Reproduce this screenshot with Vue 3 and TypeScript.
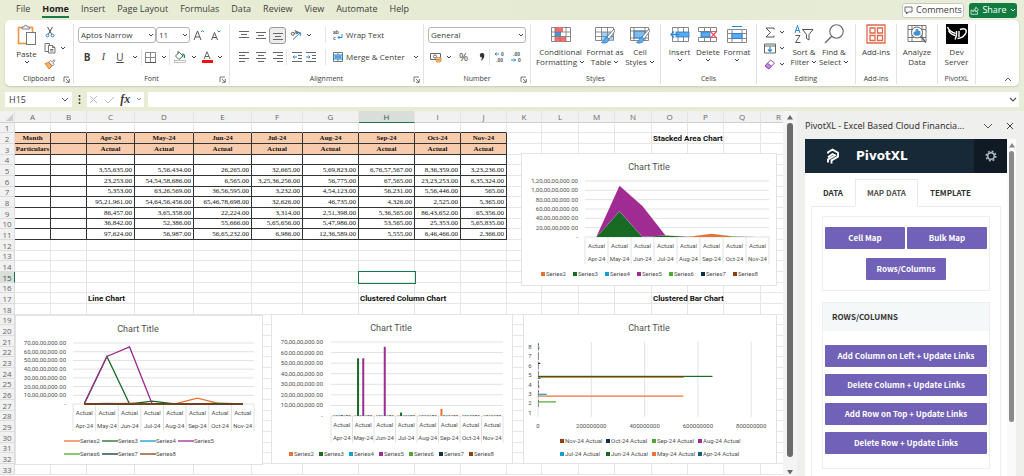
<script setup lang="ts">
interface Series {
  name: string
  color: string
  values: number[]
}

const menuTabs = ['File', 'Home', 'Insert', 'Page Layout', 'Formulas', 'Data', 'Review', 'View', 'Automate', 'Help']
const columns = 'ABCDEFGHIJKLMNOPQR'.split('')
const months = ['Apr-24', 'May-24', 'Jun-24', 'Jul-24', 'Aug-24', 'Sep-24', 'Oct-24', 'Nov-24']

const series: Series[] = [
  { name: 'Series2', color: '#e97132', values: [355635, 556434, 26265, 32665, 569823, 67657567, 836359, 323236] },
  { name: 'Series3', color: '#196b24', values: [23253, 545458686, 6565, 32536256, 56775, 67565, 2323253, 635324] },
  { name: 'Series4', color: '#0f9ed5', values: [5353, 6326569, 3656595, 3232, 454123, 56231, 556446, 565] },
  { name: 'Series5', color: '#a02b93', values: [9521961, 546456456, 654678698, 32626, 46735, 4326, 2525, 5365] },
  { name: 'Series6', color: '#4ea72e', values: [86457, 365358, 22224, 3314, 251398, 536565, 8643652, 65356] },
  { name: 'Series7', color: '#0b3048', values: [36842, 52386, 55666, 565656, 547986, 53565, 25353, 565835] },
  { name: 'Series8', color: '#8f3c12', values: [97624, 56987, 5665232, 6986, 1236589, 5555, 646466, 2366] },
]

const monthColors = ['#156082', '#e97132', '#196b24', '#0f9ed5', '#a02b93', '#4ea72e', '#0b3048', '#8f3c12']
const monthLegend = [7, 6, 5, 4, 3, 2, 1, 0]

const titles: Record<string, string> = {
  O2: 'Stacked Area Chart',
  C17: 'Line Chart',
  H17: 'Clustered Column Chart',
  O17: 'Clustered Bar Chart',
}

function money(n: number): string {
  return n.toLocaleString('en-IN', { minimumFractionDigits: 2 })
}

function cellText(col: number, row: number): string {
  const title = titles[columns[col] + row]
  if (title) return title
  if (row === 2 && col === 0) return 'Month'
  if (row === 3 && col === 0) return 'Particulars'
  if (col < 2 || col > 9) return ''
  if (row === 2) return months[col - 2]
  if (row === 3) return 'Actual'
  if (row >= 5 && row <= 11) return money(series[row - 5].values[col - 2])
  return ''
}

function cellClass(col: number, row: number) {
  const boxed = col < 10 && row >= 2 && row <= 11
  return {
    boxed,
    'above-box': col < 10 && row === 1,
    heading: boxed && row <= 3,
    amount: boxed && row >= 5,
    title: Boolean(titles[columns[col] + row]),
    selected: col === 7 && row === 15,
  }
}

function axis(max: number, step: number, top: number, bottom: number) {
  const ticks: { y: number; label: string }[] = []
  for (let v = max; v >= 0; v -= step) {
    ticks.push({ y: bottom - ((bottom - top) * v) / max, label: v ? money(v) : '-' })
  }
  return ticks
}

const area = { left: 63, right: 247, top: 27, bottom: 83, labelX: 56, max: 1.2e9, legendY: 122, legendX: 19, legendStep: 32 }
const line = { left: 57, right: 238, top: 27, bottom: 88, labelX: 50, max: 7e8 }
const column = { left: 59, right: 231, top: 27, bottom: 101, labelX: 51, max: 7e8, legendY: 141, legendX: 17, legendStep: 30 }
const bar = { left: 14, top: 27, band: 9.4, scale: 53.3 / 2e8 }

type Plot = { left: number; right: number; top: number; bottom: number; max: number }

function centre(p: Plot, i: number): number {
  return p.left + ((p.right - p.left) * (i + 0.5)) / 8
}
function height(p: Plot, v: number): number {
  return ((p.bottom - p.top) * v) / p.max
}
function linePoints(s: Series): string {
  return s.values.map((v, i) => `${centre(line, i)},${line.bottom - height(line, v)}`).join(' ')
}
function stackTotal(upTo: number, month: number): number {
  return series.slice(0, upTo).reduce((sum, s) => sum + s.values[month], 0)
}
function areaPoints(k: number): string {
  const upper = months.map((_, i) => `${centre(area, i)},${area.bottom - height(area, stackTotal(k + 1, i))}`)
  const lower = months.map((_, i) => `${centre(area, i)},${area.bottom - height(area, stackTotal(k, i))}`).reverse()
  return upper.concat(lower).join(' ')
}

const axisCharts = {
  area: { plot: area, ticks: axis(1.2e9, 2e8, area.top, area.bottom), size: '0 0 254 131', titleX: 127 },
  line: { plot: line, ticks: axis(7e8, 1e8, line.top, line.bottom), size: '0 0 246 148', titleX: 122 },
  column: { plot: column, ticks: axis(7e8, 1e8, column.top, column.bottom), size: '0 0 240 148', titleX: 119 },
}

const paneActions = [
  'Add Column on Left + Update Links',
  'Delete Column + Update Links',
  'Add Row on Top + Update Links',
  'Delete Row + Update Links',
]
</script>

<template>
  <div class="app">
    <svg class="defs" aria-hidden="true">
      <symbol id="chev" viewBox="0 0 6 6"><path d="M1 2l2 2 2-2" fill="none" stroke="#444" stroke-width="1" /></symbol>
      <symbol id="launch" viewBox="0 0 7 7"><path d="M1 6V1h5M3 3l3 3M6.300 3v3.300H3" fill="none" stroke="#555" stroke-width=".8" /></symbol>
    </svg>

    <header class="menu">
      <nav class="tabs">
        <button v-for="t in menuTabs" :key="t" :class="{ active: t === 'Home' }">{{ t }}</button>
      </nav>
      <button class="comments">
        <svg width="9" height="9" viewBox="0 0 9 9"><path d="M1 1h7v5H4L2.500 8V6H1z" fill="none" stroke="#444" stroke-width=".8" /></svg>
        Comments
      </button>
      <button class="share">
        <svg width="9" height="9" viewBox="0 0 9 9"><path d="M2.500 4H1v4.300h6.500V5.500M2.800 6c.2-2 1.300-3 3-3V1.200L8.400 3.700 5.800 6V4.400c-1.300 0-2.200.5-3 1.600z" fill="none" stroke="#fff" stroke-width=".7" /></svg>
        Share
        <svg width="6" height="6" viewBox="0 0 6 6"><path d="M1 2l2 2 2-2" fill="none" stroke="#fff" /></svg>
      </button>
    </header>

    <section class="ribbon" aria-label="Ribbon">
      <div class="group g-clipboard">
        <div class="body clip">
          <button class="big">
            <svg width="20" height="22" viewBox="0 0 20 22">
              <rect x="1.500" y="3.500" width="14" height="16" fill="#fff" stroke="#f0953f" stroke-width="1.600" />
              <path d="M5 5V3h2a1.700 1.700 0 0 1 3.400 0h2v2z" fill="#fff" stroke="#777" stroke-width=".9" />
              <rect x="9.500" y="8.500" width="9" height="12" fill="#fff" stroke="#777" />
            </svg>
            <span>Paste</span>
            <svg class="chev"><use href="#chev" /></svg>
          </button>
          <div class="stack">
            <button aria-label="Cut"><svg width="10" height="12" viewBox="0 0 10 12"><path d="M2.500 1l4.300 7.500M7.500 1L3.200 8.500" fill="none" stroke="#555" /><circle cx="2.500" cy="9.500" r="1.400" fill="none" stroke="#2b88d8" /><circle cx="7.500" cy="9.500" r="1.400" fill="none" stroke="#2b88d8" /></svg></button>
            <span></span>
            <button aria-label="Copy"><svg width="12" height="12" viewBox="0 0 12 12"><path d="M4 9.500H1v-8h4.500V3M4.500 3.500h4l2.500 2V11H4.500zM8.500 3.500v2H11M6 7.500h3.500M6 9h3.500" fill="none" stroke="#666" stroke-width=".9" /></svg></button>
            <button aria-label="Copy options"><svg class="chev"><use href="#chev" /></svg></button>
            <button aria-label="Format painter"><svg width="12" height="11" viewBox="0 0 12 11"><path d="M1 4.500l4 5.500 3-3-3.500-3.500z" fill="#f7b267" stroke="#e8842a" /><path d="M4.500 3l4 4L10 5.500 8.800 4 11 1.800 10 .8 7.800 2.800 6.500 1.500z" fill="#fff" stroke="#666" stroke-width=".8" /></svg></button>
            <span></span>
          </div>
        </div>
        <div class="caption">Clipboard<svg class="launch"><use href="#launch" /></svg></div>
      </div>

      <div class="group g-font">
        <div class="body rows">
          <div class="row font-top">
            <label class="pick"><select aria-label="Font"><option>Aptos Narrow</option></select><svg class="chev"><use href="#chev" /></svg></label>
            <label class="pick"><select aria-label="Font size"><option>11</option></select><svg class="chev"><use href="#chev" /></svg></label>
            <button aria-label="Increase font size"><svg width="12" height="12" viewBox="0 0 12 12"><path d="M1 11L4.500 2 8 11M2.200 8h4.600" fill="none" stroke="#555" /><path d="M8 3l1.500-1.500L11 3" fill="none" stroke="#2b88d8" /></svg></button>
            <button aria-label="Decrease font size"><svg width="12" height="12" viewBox="0 0 12 12"><path d="M1.500 11l3-7.500 3 7.500M2.600 8.500h3.800" fill="none" stroke="#555" /><path d="M7.500 1.500L9 3l1.500-1.500" fill="none" stroke="#2b88d8" /></svg></button>
          </div>
          <div class="row font-bottom">
            <button class="glyph bold">B</button>
            <button class="glyph italic">I</button>
            <button class="glyph under">U</button>
            <button aria-label="Underline options"><svg class="chev"><use href="#chev" /></svg></button>
            <button class="split" aria-label="Borders"><svg width="11" height="11" viewBox="0 0 11 11"><path d="M.5.5h10v10H.5zM5.500.5v10M.5 5.500h10" fill="none" stroke="#888" /><path d="M0 10.500h11" stroke="#555" /></svg></button>
            <button aria-label="Border options"><svg class="chev"><use href="#chev" /></svg></button>
            <button class="split" aria-label="Fill color"><svg width="12" height="12" viewBox="0 0 12 12"><path d="M1.500 5l3.700-3.800L9 5 5 8.500zM4 0v3" fill="#fff" stroke="#4a6b50" /><path d="M8.500 3c2 .5 2.500 2 1.700 4" fill="none" stroke="#1f8a5b" stroke-width="1.300" /><rect x=".5" y="9.500" width="11" height="2" fill="#fff" stroke="#aaa" stroke-width=".7" /></svg></button>
            <button aria-label="Fill options"><svg class="chev"><use href="#chev" /></svg></button>
            <button aria-label="Font color"><svg width="12" height="12" viewBox="0 0 12 12"><path d="M3 8l3-7.300L9 8M4 5.500h4" fill="none" stroke="#666" /><rect x="1" y="9" width="11" height="3" fill="#f01414" /></svg></button>
            <button aria-label="Font color options"><svg class="chev"><use href="#chev" /></svg></button>
          </div>
        </div>
        <div class="caption">Font<svg class="launch"><use href="#launch" /></svg></div>
      </div>

      <div class="group g-align">
        <div class="body rows">
          <div class="row align-row">
            <button aria-label="Top align"><svg width="10" height="10" viewBox="0 0 10 10"><path d="M0 1.500h10M2 4.500h6M0 7.500h10" stroke="#666" /></svg></button>
            <button aria-label="Middle align"><svg width="10" height="10" viewBox="0 0 10 10"><path d="M0 2.500h10M2 5.500h6M0 8.500h10" stroke="#666" /></svg></button>
            <button class="on" aria-label="Bottom align"><svg width="10" height="10" viewBox="0 0 10 10"><path d="M0 3.500h10M2 6.500h6M0 9.500h10" stroke="#666" /></svg></button>
            <button aria-label="Orientation"><svg width="12" height="12" viewBox="0 0 12 12"><path d="M3 10.500L10 4M7 3.500l3.500.2L10.300 7" fill="none" stroke="#2b88d8" /><circle cx="2.800" cy="4.800" r="1.500" fill="none" stroke="#555" stroke-width=".9" /><path d="M3.500 3.200l1.500 2M5 1l2.300 3.500" stroke="#555" stroke-width=".9" /><circle cx="6.800" cy="3.500" r="1.200" fill="none" stroke="#555" stroke-width=".9" /></svg></button>
            <button aria-label="Orientation options"><svg class="chev"><use href="#chev" /></svg></button>
            <button class="split wide"><svg width="10" height="12" viewBox="0 0 10 12"><text x="0" y="5" class="tiny">ab</text><text x="0" y="11" class="tiny">c</text><path d="M9 5v3.500H5M6.500 7L5 8.500 6.500 10" fill="none" stroke="#2b88d8" /></svg>Wrap Text</button>
          </div>
          <div class="row align-row">
            <button aria-label="Align left"><svg width="10" height="10" viewBox="0 0 10 10"><path d="M0 .5h10M0 3.500h6M0 6.500h10M0 9.500h6" stroke="#666" /></svg></button>
            <button aria-label="Center"><svg width="10" height="10" viewBox="0 0 10 10"><path d="M0 .5h10M2 3.500h6M0 6.500h10M2 9.500h6" stroke="#666" /></svg></button>
            <button aria-label="Align right"><svg width="10" height="10" viewBox="0 0 10 10"><path d="M0 .5h10M4 3.500h6M0 6.500h10M4 9.500h6" stroke="#666" /></svg></button>
            <button class="split" aria-label="Decrease indent"><svg width="10" height="10" viewBox="0 0 10 10"><path d="M0 .5h10M6 3.500h4M6 6.500h4M0 9.500h10" stroke="#666" /><path d="M5 5H1M2.500 3.500L1 5l1.500 1.500" fill="none" stroke="#2b88d8" /></svg></button>
            <button class="indent" aria-label="Increase indent"><svg width="10" height="10" viewBox="0 0 10 10"><path d="M0 .5h10M6 3.500h4M6 6.500h4M0 9.500h10" stroke="#666" /><path d="M0 5h4M2.500 3.500L4 5 2.500 6.500" fill="none" stroke="#2b88d8" /></svg></button>
            <button class="split wide"><svg width="10" height="12" viewBox="0 0 10 12"><path d="M.5 1.500h9v9h-9zM5 1.500v9" fill="#fff" stroke="#777" /><rect x=".5" y="4" width="9" height="4" fill="#9fd0f5" stroke="#2b88d8" /><path d="M2 6h6" stroke="#1767ad" /></svg>Merge &amp; Center<svg class="chev"><use href="#chev" /></svg></button>
          </div>
        </div>
        <div class="caption">Alignment<svg class="launch"><use href="#launch" /></svg></div>
      </div>

      <div class="group g-number">
        <div class="body rows">
          <div class="row">
            <label class="pick"><select aria-label="Number format"><option>General</option></select><svg class="chev"><use href="#chev" /></svg></label>
          </div>
          <div class="row number-row">
            <button aria-label="Accounting format"><svg width="12" height="11" viewBox="0 0 12 11"><path d="M.5 1.500h10v6H.5z" fill="#fff" stroke="#666" /><circle cx="5" cy="4.500" r="1.500" fill="none" stroke="#666" /><path d="M6 6.500c0-1.500 5-1.500 5 0V9c0 1.500-5 1.500-5 0zM6 7.500c1 1 4 1 5 0" fill="#fbd09c" stroke="#e8842a" stroke-width=".9" /></svg></button>
            <button aria-label="Accounting options"><svg class="chev"><use href="#chev" /></svg></button>
            <button class="glyph percent">%</button>
            <button aria-label="Comma style"><svg width="6" height="10" viewBox="0 0 6 10"><path d="M3 1a2 2 0 0 1 2.300 2.200C5.300 6 4 8 1.500 9c1-1.300 1.500-2.500 1.500-3.600A2.200 2.200 0 0 1 3 1z" fill="#333" /></svg></button>
            <button class="split" aria-label="Increase decimal"><svg width="11" height="12" viewBox="0 0 11 12"><path d="M5 3H1M2.500 1.500L1 3l1.500 1.500" fill="none" stroke="#2b88d8" /><text x="7" y="5" class="tiny">0</text><text x="2" y="11" class="tiny">.00</text></svg></button>
            <button aria-label="Decrease decimal"><svg width="11" height="12" viewBox="0 0 11 12"><path d="M0 9h4.500M3 7.500L4.500 9 3 10.500" fill="none" stroke="#2b88d8" /><text x="2" y="5" class="tiny">.00</text><text x="7" y="11" class="tiny">0</text></svg></button>
          </div>
        </div>
        <div class="caption">Number<svg class="launch"><use href="#launch" /></svg></div>
      </div>

      <div class="group g-styles">
        <div class="body styles">
          <button class="big">
            <svg width="20" height="18" viewBox="0 0 20 18"><path d="M.5 1.500h19v14H.5z" fill="#fff" stroke="#888" /><rect x="4" y="1.500" width="8" height="4.500" fill="#ff6b6b" /><rect x="4" y="6" width="6" height="4.500" fill="#4a90d9" /><rect x="4" y="10.500" width="11" height="5" fill="#ff6b6b" /><path d="M4 1v15M9 10v6M15 1v15M0 6h20M0 10.500h20" stroke="#777" stroke-width=".8" /></svg>
            <span>Conditional</span><span>Formatting <svg class="chev"><use href="#chev" /></svg></span>
          </button>
          <button class="big">
            <svg width="20" height="18" viewBox="0 0 20 18"><path d="M.5 1.500h18v13H.5z" fill="#fff" stroke="#888" /><rect x="6" y="6" width="12" height="8.500" fill="#9fd0f5" /><path d="M6.500 1v14M12.500 1v14M0 6h19M0 10.500h19" stroke="#777" stroke-width=".8" /><path d="M19 3l-7 8 2 2 6-8z" fill="#fff" stroke="#666" stroke-width=".8" /><path d="M12 11c-3 0-2 4-5.500 5.500 3 1.500 7.500 0 7.500-3.500z" fill="#5aaaf0" stroke="#2b78c8" stroke-width=".8" /></svg>
            <span>Format as</span><span>Table <svg class="chev"><use href="#chev" /></svg></span>
          </button>
          <button class="big">
            <svg width="20" height="18" viewBox="0 0 20 18"><path d="M.5 1.500h18v13H.5z" fill="#fff" stroke="#888" /><rect x="4" y="5" width="11" height="7" fill="#7cbcf2" stroke="#2b88d8" /><path d="M4 1v14M15 1v14M0 5h19M0 12h19" stroke="#777" stroke-width=".8" /><path d="M19 3l-7 8 2 2 6-8z" fill="#fff" stroke="#666" stroke-width=".8" /><path d="M12 11c-3 0-2 4-5.500 5.500 3 1.500 7.500 0 7.500-3.500z" fill="#5aaaf0" stroke="#2b78c8" stroke-width=".8" /></svg>
            <span>Cell</span><span>Styles <svg class="chev"><use href="#chev" /></svg></span>
          </button>
        </div>
        <div class="caption">Styles</div>
      </div>

      <div class="group g-cells">
        <div class="body cells">
          <button class="big">
            <svg width="20" height="18" viewBox="0 0 20 18"><path d="M2.500 1.500h16v14h-16zM8 1.500v14M13.500 1.500v14" fill="#fff" stroke="#888" /><rect x="6" y="6" width="13" height="5" fill="#5aaaf0" stroke="#2b78c8" stroke-width=".8" /><path d="M9 8.500H1M4 5.500l-3 3 3 3" fill="none" stroke="#2b88d8" stroke-width="1.300" /></svg>
            <span>Insert</span><svg class="chev"><use href="#chev" /></svg>
          </button>
          <button class="big">
            <svg width="20" height="18" viewBox="0 0 20 18"><path d="M.5 1.500h18v4H.5zM.5 11.500h18v4H.5zM6.500 1.500v4M12.500 1.500v4M6.500 11.500v4M12.500 11.500v4" fill="#fff" stroke="#888" /><rect x="3" y="6" width="9" height="5" fill="#5aaaf0" stroke="#2b78c8" stroke-width=".8" /><path d="M12 5l7 7.500M19 5l-7 7.500" stroke="#e8505b" stroke-width="1.200" /></svg>
            <span>Delete</span><svg class="chev"><use href="#chev" /></svg>
          </button>
          <button class="big">
            <svg width="20" height="18" viewBox="0 0 20 18"><path d="M5 .5h10" stroke="#2b88d8" /><path d="M.5 3.500h19v13H.5zM5 3.500v13M15 3.500v13M0 7.500h20M0 12.500h20" fill="#fff" stroke="#888" /><rect x="5" y="7.500" width="10" height="5" fill="#5aaaf0" stroke="#2b78c8" stroke-width=".8" /></svg>
            <span>Format</span><svg class="chev"><use href="#chev" /></svg>
          </button>
        </div>
        <div class="caption">Cells</div>
      </div>

      <div class="group g-editing">
        <div class="body editing">
          <div class="stack">
            <button aria-label="Sum"><svg width="10" height="11" viewBox="0 0 10 11"><path d="M9 2.500V1H1l4.500 4.500L1 10h8V8.500" fill="none" stroke="#555" /></svg></button>
            <button aria-label="Sum options"><svg class="chev"><use href="#chev" /></svg></button>
            <button aria-label="Fill"><svg width="12" height="11" viewBox="0 0 12 11"><path d="M.5 1h11v9H.5zM.5 3h11" fill="#fff" stroke="#666" /><path d="M6 3.500v5M4 6.500l2 2 2-2" fill="none" stroke="#2b88d8" stroke-width="1.200" /></svg></button>
            <button aria-label="Fill options"><svg class="chev"><use href="#chev" /></svg></button>
            <button aria-label="Clear"><svg width="12" height="11" viewBox="0 0 12 11"><path d="M1 7l5.500-6L10.500 4 5 10z" fill="#fff" stroke="#9b4fb5" /><path d="M1 7l2.500-2.800L7.500 7.300 5 10z" fill="#c886dc" stroke="#9b4fb5" /></svg></button>
            <button aria-label="Clear options"><svg class="chev"><use href="#chev" /></svg></button>
          </div>
          <button class="big">
            <svg width="20" height="20" viewBox="0 0 20 20"><path d="M1 9l2.500-7.500L6 9M2 6.500h3" fill="none" stroke="#2b88d8" /><path d="M1.500 11.500h4.500l-4.500 7H6.500" fill="none" stroke="#555" /><path d="M8.500 5.500h10.500l-4 5v5.500l-2.500-1.500v-4z" fill="none" stroke="#555" /></svg>
            <span>Sort &amp;</span><span>Filter <svg class="chev"><use href="#chev" /></svg></span>
          </button>
          <button class="big">
            <svg width="20" height="20" viewBox="0 0 20 20"><circle cx="12.500" cy="7.500" r="6.700" fill="none" stroke="#666" stroke-width="1.100" /><path d="M7.700 12.300L1 19" stroke="#666" stroke-width="1.300" /></svg>
            <span>Find &amp;</span><span>Select <svg class="chev"><use href="#chev" /></svg></span>
          </button>
        </div>
        <div class="caption">Editing</div>
      </div>

      <div class="group g-one">
        <div class="body single">
          <button class="big">
            <svg width="20" height="20" viewBox="0 0 20 20"><path d="M1 1h18v18H1zM4 4h5v5H4zM11.500 4h5v5h-5zM4 11.500h5v5H4zM11.500 11.500h5v5h-5z" fill="#fff" stroke="#e2694a" stroke-width="1.300" /></svg>
            <span>Add-ins</span>
          </button>
        </div>
        <div class="caption">Add-ins</div>
      </div>

      <div class="group g-one">
        <div class="body single">
          <button class="big">
            <svg width="20" height="20" viewBox="0 0 20 20"><path d="M1 1.500h18v16H1zM1 5.500h18M1 13.500h18M5 1.500v16M15 1.500v16" fill="#fff" stroke="#777" /><circle cx="10" cy="8.500" r="5.500" fill="#fff" stroke="#666" /><path d="M7 11V8h2v3.500M9 11.500V5.500h2v6M11 11.500V7.500h2v3.500" fill="#5aaaf0" stroke="#2b78c8" stroke-width=".7" /><path d="M14 12.500l5 6" stroke="#666" stroke-width="1.400" /></svg>
            <span>Analyze</span><span>Data</span>
          </button>
        </div>
      </div>

      <div class="group g-pivot">
        <div class="body single">
          <button class="big">
            <svg width="22" height="20" viewBox="0 0 22 20"><rect width="22" height="20" fill="#000" /><path d="M1.500 3c1.500 3.500 4.500 5.500 8 6.500M2.500 6.500c1.500 3 4 4.500 7 5" fill="none" stroke="#fff" stroke-width="1.500" /><path d="M9 15.500c1.500-2.500 2-5.500 1.500-8.500M13 13V7M14 5.500c4.500-1.500 7-.5 6 3-1 3-3.500 5.500-8.500 6" fill="none" stroke="#fff" stroke-width="1.400" /></svg>
            <span>Dev</span><span>Server</span>
          </button>
        </div>
        <div class="caption">PivotXL</div>
      </div>

      <button class="collapse" aria-label="Collapse ribbon"><svg width="8" height="6" viewBox="0 0 8 6"><path d="M1 5l3-3 3 3" fill="none" stroke="#555" /></svg></button>
    </section>

    <section class="formula" aria-label="Formula bar">
      <label class="name-box"><input value="H15" aria-label="Name box" /><svg width="8" height="6" viewBox="0 0 8 6"><path d="M1 1l3 3 3-3" fill="none" stroke="#555" /></svg></label>
      <svg width="3" height="9" viewBox="0 0 3 9"><path d="M1.500 0v2M1.500 3.500v2M1.500 7v2" stroke="#444" stroke-width="1.600" /></svg>
      <div class="fx">
        <button aria-label="Cancel"><svg width="9" height="9" viewBox="0 0 9 9"><path d="M1 1l7 7M8 1L1 8" stroke="#bbb" /></svg></button>
        <button aria-label="Enter"><svg width="11" height="8" viewBox="0 0 11 8"><path d="M1 4l3 3 6-6" fill="none" stroke="#bbb" /></svg></button>
        <button class="fx-label">fx</button>
        <svg width="6" height="5" viewBox="0 0 6 5"><path d="M1 1l2 2 2-2" fill="none" stroke="#888" /></svg>
      </div>
      <label class="entry"><input value="" aria-label="Formula" /><svg width="8" height="6" viewBox="0 0 8 6"><path d="M1 1l3 3 3-3" fill="none" stroke="#555" stroke-width="1.200" /></svg></label>
    </section>

    <main class="work">
      <div class="sheet">
        <table>
          <colgroup>
            <col class="c-head" />
            <col v-for="c in columns" :key="c" :class="'c-' + c" />
          </colgroup>
          <thead>
            <tr>
              <th class="corner"><svg width="7" height="7" viewBox="0 0 7 7"><path d="M7 0v7H0z" fill="#ccc" /></svg></th>
              <th v-for="c in columns" :key="c" :class="{ current: c === 'H' }">{{ c }}</th>
            </tr>
          </thead>
          <tbody>
            <tr v-for="r in 33" :key="r">
              <th :class="{ current: r === 15 }">{{ r }}</th>
              <td v-for="(c, i) in columns" :key="c" :class="cellClass(i, r)">{{ cellText(i, r) }}</td>
            </tr>
          </tbody>
        </table>

        <figure v-for="(chart, kind) in axisCharts" :key="kind" :class="['chart', 'chart-' + kind]">
          <svg :viewBox="chart.size">
            <text :x="chart.titleX" y="16" class="chart-title">Chart Title</text>
            <g v-for="t in chart.ticks" :key="t.y">
              <line :x1="chart.plot.left" :x2="chart.plot.right" :y1="t.y" :y2="t.y" class="grid-line" />
              <text :x="chart.plot.labelX" :y="t.y + 2" class="end">{{ t.label }}</text>
            </g>
            <line
              v-for="n in 9" :key="'s' + n" class="grid-line"
              :x1="chart.plot.left + ((chart.plot.right - chart.plot.left) * (n - 1)) / 8"
              :x2="chart.plot.left + ((chart.plot.right - chart.plot.left) * (n - 1)) / 8"
              :y1="chart.plot.bottom" :y2="chart.plot.bottom + 27"
            />
            <g v-for="(m, i) in months" :key="m">
              <text :x="centre(chart.plot, i)" :y="chart.plot.bottom + 11" class="mid">Actual</text>
              <text :x="centre(chart.plot, i)" :y="chart.plot.bottom + 24" class="mid">{{ m }}</text>
            </g>

            <template v-if="kind === 'area'">
              <polygon v-for="(s, k) in series" :key="s.name" :points="areaPoints(k)" :fill="s.color" />
            </template>
            <template v-else-if="kind === 'line'">
              <polyline v-for="s in series" :key="s.name" :points="linePoints(s)" :stroke="s.color" class="trace" />
              <g v-for="(s, k) in series" :key="'l' + s.name">
                <line :x1="48 + (k % 4) * 38" :x2="64 + (k % 4) * 38" :y1="k < 4 ? 125 : 138" :y2="k < 4 ? 125 : 138" :stroke="s.color" class="trace" />
                <text :x="64 + (k % 4) * 38" :y="k < 4 ? 127 : 140">{{ s.name }}</text>
              </g>
            </template>
            <template v-else>
              <g v-for="(s, k) in series" :key="s.name">
                <rect
                  v-for="(v, i) in s.values" :key="i"
                  :x="centre(column, i) + (k - 3) * 2.6 - 1" width="2"
                  :y="column.bottom - Math.max(height(column, v), 0.6)" :height="Math.max(height(column, v), 0.6)"
                  :fill="s.color"
                />
              </g>
            </template>
            <template v-if="kind !== 'line'">
              <g v-for="(s, k) in series" :key="'g' + s.name">
                <rect :x="(kind === 'area' ? area : column).legendX + k * (kind === 'area' ? area : column).legendStep" :y="(kind === 'area' ? area : column).legendY - 4" width="4" height="4" :fill="s.color" />
                <text :x="(kind === 'area' ? area : column).legendX + 5 + k * (kind === 'area' ? area : column).legendStep" :y="(kind === 'area' ? area : column).legendY">{{ s.name }}</text>
              </g>
            </template>
          </svg>
        </figure>

        <figure class="chart chart-bar">
          <svg viewBox="0 0 252 148">
            <text x="125" y="16" class="chart-title">Chart Title</text>
            <g v-for="n in 5" :key="n">
              <line :x1="bar.left + (n - 1) * 53.3" :x2="bar.left + (n - 1) * 53.3" y1="27" y2="102" class="grid-line" />
              <text :x="bar.left + (n - 1) * 53.3" y="113" class="mid">{{ (n - 1) * 200000000 }}</text>
            </g>
            <text v-for="n in 8" :key="'c' + n" x="6" :y="bar.top + (8 - n) * bar.band + 7" class="mid">{{ n }}</text>
            <g v-for="(s, k) in series" :key="s.name">
              <rect
                v-for="(v, i) in s.values" :key="i"
                :x="bar.left" :width="Math.max(v * bar.scale, 0.6)"
                :y="bar.top + (6 - k) * bar.band + 7.400 - i * 0.9" height="1.200"
                :fill="monthColors[i]"
              />
            </g>
            <g v-for="(m, i) in monthLegend" :key="'m' + m">
              <rect :x="36 + (i % 4) * 46" :y="i < 4 ? 124 : 137" width="4" height="4" :fill="monthColors[m]" />
              <text :x="41 + (i % 4) * 46" :y="i < 4 ? 128 : 141">{{ months[m] }} Actual</text>
            </g>
          </svg>
        </figure>
      </div>

      <div class="scroll sheet-scroll">
        <svg width="8" height="6" viewBox="0 0 8 6"><path d="M4 1l3 4.500H1z" fill="#666" /></svg>
        <i></i>
        <svg width="8" height="6" viewBox="0 0 8 6"><path d="M4 5.500L1 1h6z" fill="#666" /></svg>
      </div>

      <aside class="pane">
        <div class="pane-head">
          <h2>PivotXL - Excel Based Cloud Financia...</h2>
          <button aria-label="Pane options"><svg width="10" height="6" viewBox="0 0 10 6"><path d="M1 1l4 4 4-4" fill="none" stroke="#555" /></svg></button>
          <button aria-label="Close pane"><svg width="8" height="8" viewBox="0 0 8 8"><path d="M1 1l6 6M7 1L1 7" stroke="#444" /></svg></button>
        </div>
        <div class="pane-body">
          <div class="pane-page">
            <div class="brand">
              <svg width="14" height="17" viewBox="0 0 14 17"><path d="M2 5.500V4.200L6.500 1.700l5.500 3v4L5.500 12.300v3.200M2 9.200L6.500 6l2.500 1.300-7 4.200v3" fill="none" stroke="#fff" stroke-width="1.900" /></svg>
              <strong>PivotXL</strong>
              <button aria-label="Settings"><svg width="12" height="12" viewBox="0 0 12 12"><circle cx="6" cy="6" r="3.300" fill="none" stroke="#b4bbc4" stroke-width="1.500" /><circle cx="6" cy="6" r="4.800" fill="none" stroke="#b4bbc4" stroke-width="1.500" stroke-dasharray="1.900 1.870" /></svg></button>
            </div>
            <nav class="pane-tabs">
              <button>DATA</button>
              <button class="active">MAP DATA</button>
              <button>TEMPLATE</button>
            </nav>
            <div class="panel">
              <div class="card maps">
                <button class="action">Cell Map</button>
                <button class="action">Bulk Map</button>
                <button class="action">Rows/Columns</button>
              </div>
              <div class="card">
                <h3>ROWS/COLUMNS</h3>
                <div class="list">
                  <button v-for="a in paneActions" :key="a" class="action">{{ a }}</button>
                </div>
              </div>
            </div>
          </div>
          <div class="scroll pane-scroll">
            <svg width="8" height="6" viewBox="0 0 8 6"><path d="M4 1l3 4.500H1z" fill="#888" /></svg>
            <i></i>
          </div>
        </div>
      </aside>
    </main>
  </div>
</template>

<style>
body {
  margin: 0;
  overflow: hidden;
}
</style>

<style scoped>
.app {
  display: flex;
  flex-direction: column;
  height: 100vh;
  overflow: hidden;
  background: linear-gradient(90deg, #e9edd6, #e5ead2 60%, #e8edda);
  color: #3d3d3d;
  font: 8px/10px "Open Sans", "Noto Sans", sans-serif;
}
.defs { position: absolute; width: 0; height: 0; }
button {
  display: flex;
  align-items: center;
  justify-content: center;
  margin: 0;
  padding: 0;
  border: 0;
  background: none;
  color: inherit;
  font: inherit;
  white-space: nowrap;
}
svg { flex: none; display: block; }
.chev { width: 6px; height: 6px; }
.tiny { font: bold 5px "Liberation Sans", sans-serif; fill: #555; }

/* menu */
.menu { display: flex; align-items: center; height: 20px; padding: 0 7px 0 16px; gap: 5px; }
.tabs { display: flex; flex: 1; gap: 12px; font-size: 9px; line-height: 14px; }
.tabs button { height: 16px; border-bottom: 2px solid transparent; }
.tabs .active { font-weight: bold; color: #222; border-color: #1a7a48; }
.comments, .share { gap: 3px; height: 15px; border-radius: 3px; font-size: 9px; }
.comments { width: 62px; background: #fff; border: 1px solid #c9ccba; box-sizing: border-box; }
.share { width: 48px; background: #107c41; color: #fff; }

/* ribbon */
.ribbon {
  display: flex;
  height: 66px;
  margin: 0 5px;
  background: #fff;
  border-radius: 5px;
  box-shadow: 0 1px 2px #c8ccb6;
}
.group {
  display: flex;
  flex-direction: column;
  flex: none;
  box-sizing: border-box;
  margin: 4px 0 2px;
  border-right: 1px solid #e2e2e2;
}
.g-clipboard { width: 69px; }
.g-font { width: 156px; }
.g-align { width: 194px; }
.g-number { width: 107px; }
.g-styles { width: 130px; }
.g-cells { width: 96px; }
.g-editing { width: 99px; }
.g-one { width: 41px; }
.g-pivot { width: 38px; }
.body { flex: 1; }
.caption {
  position: relative;
  height: 10px;
  font-size: 7px;
  text-align: center;
}
.launch { position: absolute; right: 3px; top: 2px; width: 7px; height: 7px; }
.big { flex-direction: column; justify-content: flex-start; }
.big > svg:first-child { margin-bottom: 3px; }
.big span { display: flex; align-items: center; gap: 2px; }
.clip { display: grid; grid-template-columns: 43px 1fr; }
.clip .stack { grid-template-columns: 16px 9px; margin-left: -6px; }
.stack { display: grid; grid-template-rows: repeat(3, 16px); grid-template-columns: 14px 10px; align-content: start; justify-items: center; }
.rows { display: flex; flex-direction: column; gap: 4px; padding: 2px 4px 0; }
.row { display: flex; height: 18px; align-items: center; }
.pick { position: relative; display: flex; flex: 1; }
.pick select {
  appearance: none;
  width: 100%;
  height: 16px;
  padding: 0 2px;
  border: 1px solid #b5b5b5;
  border-radius: 3px;
  background: #fff;
  color: inherit;
  font: 8px/12px "Open Sans", "Noto Sans", sans-serif;
}
.pick .chev { position: absolute; right: 2px; top: 5px; }
.font-top { display: grid; grid-template-columns: 78px 34px 17px 17px; }
.font-bottom { display: grid; grid-template-columns: 18px 15px 18px 12px 18px 10px 20px 9px 17px 9px; }
.glyph { font-size: 10px; }
.bold { font-weight: bold; }
.italic { font-family: "Liberation Serif", serif; font-style: italic; }
.under { text-decoration: underline; }
.percent { font-size: 11px; }
.split { border-left: 1px solid #e4e4e4; height: 16px; }
.align-row { display: grid; grid-template-columns: 19px 16px 17px 20px 6px 1fr; }
.align-row .on { box-sizing: border-box; height: 17px; border: 1px solid #999; border-radius: 3px; background: #ececec; }
.align-row .wide { justify-content: flex-start; gap: 3px; margin-left: 13px; padding-left: 7px; }
.align-row .wide .chev { margin-left: 5px; }
.indent { margin-left: 4px; }
.number-row { display: grid; grid-template-columns: 16px 9px 21px 15px 20px 14px; }
.styles { display: grid; grid-template-columns: 49px 40px 30px; padding: 2px 0 0 5px; }
.cells { display: grid; grid-template-columns: 27px 30px 28px; padding: 2px 0 0 5px; }
.editing { display: grid; grid-template-columns: 26px 30px 30px; padding-left: 6px; }
.single { display: grid; }
.collapse { flex: 1; align-self: flex-end; justify-content: flex-end; height: 14px; padding-right: 7px; }

/* formula bar */
.formula { display: flex; align-items: center; gap: 4px; margin: 6px 5px 4px; height: 15px; }
.formula input {
  flex: 1;
  min-width: 0;
  padding: 0 4px;
  border: 0;
  background: none;
  color: inherit;
  font: 9px/13px "Open Sans", "Noto Sans", sans-serif;
}
.name-box, .entry, .fx { display: flex; align-items: center; height: 100%; background: #fff; }
.name-box { width: 67px; padding-right: 3px; box-sizing: border-box; margin-right: 2px; }
.entry { flex: 1; padding-right: 2px; }
.fx { width: 57px; box-sizing: border-box; padding: 0 2px; justify-content: space-between; margin-left: 2px; }
.fx-label { font: italic bold 12px/13px "Liberation Serif", serif; }

/* sheet */
.work { display: flex; flex: 1; min-height: 0; }
.sheet { position: relative; flex: 1; min-width: 0; overflow: hidden; background: #fff; }
table { table-layout: fixed; width: calc(100% + 14px); border-collapse: separate; border-spacing: 0; }
.c-head { width: 15px; }
.c-A, .c-B, .c-M, .c-O, .c-P { width: 36px; }
.c-C { width: 48px; }
.c-D { width: 59px; }
.c-E { width: 58px; }
.c-F { width: 51px; }
.c-G, .c-H { width: 56px; }
.c-I, .c-J { width: 46px; }
.c-K { width: 35px; }
.c-L, .c-N, .c-Q { width: 37px; }
th, td {
  box-sizing: border-box;
  height: 11px;
  padding: 0;
  border: solid #e6e6e6;
  border-width: 0 1px 1px 0;
  line-height: 9px;
  white-space: nowrap;
}
tbody tr:nth-child(3n + 1) > * { height: 10px; }
th { background: #f1f1f1; color: #666; font-weight: normal; font-size: 8px; border-color: #dcdcdc; }
thead th { height: 12px; border-right-color: #e4e4e4; border-bottom-color: #cfcfcf; }
.corner svg { margin: 2px 1px 0 auto; }
thead .current { background: #d9dedb; border-bottom-color: #1a7a48; color: #2d5a43; }
tbody .current { background: #d9dedb; border-right-color: #1a7a48; color: #2d5a43; }
td.above-box { border-bottom-color: #333; }
td.boxed {
  border-color: #333;
  color: #111;
  font-family: "Liberation Serif", serif;
  font-size: 7px;
  text-align: center;
}
td.amount { padding-right: 2px; text-align: right; }
td.heading { background: #f8cbad; font-weight: bold; }
td.title { font: bold 8px/9px Roboto, "Liberation Sans", sans-serif; color: #111; padding-left: 1px; }
td.selected { outline: 1px solid #1a7a48; outline-offset: 0; }

/* charts */
.chart { position: absolute; margin: 0; background: #fff; outline: 1px solid #e3e3e3; }
.chart svg { width: 100%; height: 100%; }
.chart text { font: 6px Roboto, "Liberation Sans", sans-serif; fill: #505050; }
.chart .chart-title { font-size: 9px; text-anchor: middle; }
.chart .end { text-anchor: end; }
.chart .mid { text-anchor: middle; }
.grid-line { stroke: #e2e2e2; stroke-width: 1; }
.trace { fill: none; stroke-width: 1.3; }
.chart-area { left: 522px; top: 43px; width: 254px; height: 131px; }
.chart-line { left: 16px; top: 205px; width: 246px; height: 148px; }
.chart-column { left: 272px; top: 204px; width: 240px; height: 148px; }
.chart-bar { left: 524px; top: 204px; width: 252px; height: 148px; }

/* scroll bars */
.scroll { display: flex; flex-direction: column; align-items: center; flex: none; }
.scroll i { width: 6px; border-radius: 3px; }
.sheet-scroll { position: relative; width: 14px; padding: 3px 0 1px; background: #f4f4f4; justify-content: space-between; }
.sheet-scroll i { flex: 1; margin: 3px 0 12px; background: #6b6b6b; }
.pane-scroll { width: 9px; padding-top: 3px; background: #fafafa; }
.pane-scroll i { width: 5px; height: 81%; margin-top: 3px; background: #8a8a8a; }

/* task pane */
.pane { display: flex; flex-direction: column; flex: 0 0 227px; box-sizing: border-box; padding: 0 8px; background: #efefee; }
.pane-head { display: flex; align-items: center; height: 28px; gap: 13px; padding: 1px 2px 0 0; box-sizing: border-box; }
.pane-head h2 { flex: 1; margin: 0; font: 9px/12px "Noto Sans", "Open Sans", sans-serif; white-space: nowrap; color: #333; }
.pane-body { display: flex; flex: 1; min-height: 0; }
.pane-page { flex: 1; overflow: hidden; background: #fff; font-family: "Noto Sans CJK SC", "Noto Sans", sans-serif; }
.brand { display: flex; align-items: center; height: 34px; padding-left: 21px; background: #172836; color: #fff; }
.brand strong { flex: 1; padding-left: 16px; font: bold 12px/16px "DejaVu Sans", sans-serif; }
.brand button { width: 33px; height: 100%; background: #101a24; }
.pane-tabs { display: flex; padding: 6px 6px 0; color: #333; font-weight: bold; }
.pane-tabs button { box-sizing: border-box; height: 28px; padding: 0 11px; border: 1px solid transparent; border-bottom-color: #e6eaea; }
.pane-tabs button:last-child { flex: 1; justify-content: flex-start; }
.pane-tabs .active { border-color: #e6eaea; border-bottom-color: transparent; color: #555; }
.panel { margin: 0 6px; padding: 9px 10px 20px; border: solid #eceff0; border-width: 0 1px; }
.card { border: 1px solid #eceff0; margin-bottom: 11px; }
.maps { display: grid; grid-template-columns: 1fr 1fr; gap: 9px 2px; padding: 10px 2px; }
.action { height: 22px; border-radius: 1px; background: #7162b7; color: #fff; font-weight: bold; }
.maps .action:last-child { grid-column: 1 / 3; justify-self: center; width: 80px; }
.card h3 { margin: 0; padding: 9px; background: #f5f8f8; color: #333; font-size: 8px; line-height: 10px; font-weight: bold; }
.list { display: flex; flex-direction: column; gap: 7px; padding: 14px 2px; }
</style>
